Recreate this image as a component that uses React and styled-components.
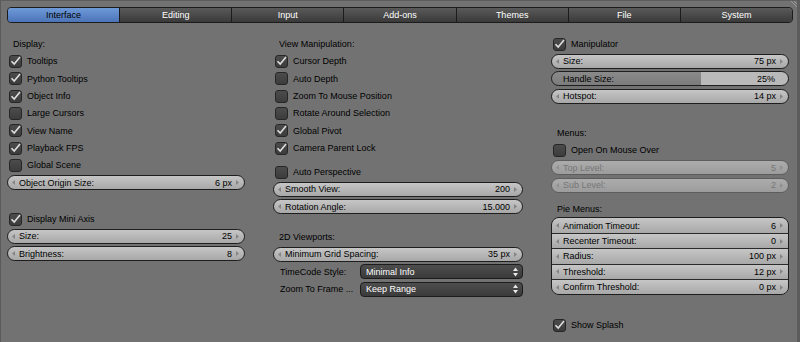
import React from "react";
import styled, { createGlobalStyle } from "styled-components";

const U = 17.33;

const GlobalStyle = createGlobalStyle`
  body {
    margin: 0;
    background: #727272;
    font-family: "Liberation Sans", Arial, sans-serif;
  }
`;

const Window = styled.div`
  position: relative;
  width: 800px;
  height: 342px;
  box-sizing: border-box;
  background: #727272;
  border-top: 1px solid #5e5e5e;
  border-left: 1px solid #5a5a5a;
  border-right: 3px solid #5c5c5c;
  overflow: hidden;
  font-size: 9px;
  color: #000;
`;

const Corner = styled.svg`
  position: absolute;
  top: 0;
  right: 0;
`;

const TabBar = styled.div`
  display: flex;
  height: 16px;
  margin: 6px 4px 0 6px;
  box-sizing: border-box;
  border: 1px solid #1c1c1c;
  border-radius: 4px;
  overflow: hidden;
`;

const Tab = styled.div`
  flex: 1;
  display: flex;
  align-items: center;
  justify-content: center;
  color: ${(p) => (p.active ? "#000" : "#fff")};
  background: ${(p) =>
    p.active
      ? "linear-gradient(#6e9ad8, #4c74b9)"
      : "linear-gradient(#5a5a5a, #3a3a3a)"};
  & + & {
    border-left: 1px solid #1c1c1c;
  }
`;

const Columns = styled.div`
  display: grid;
  grid-template-columns: 238px 250px 238px;
  column-gap: 28px;
  padding: 12.5px 0 0 6px;
`;

const Column = styled.div`
  display: flex;
  flex-direction: column;
`;

const SectionLabel = styled.div`
  height: ${U}px;
  display: flex;
  align-items: center;
  padding-left: 6px;
`;

const Row = styled.div`
  height: ${U}px;
  display: flex;
  align-items: center;
`;

const Spacer = styled.div`
  height: ${(p) => p.h}px;
  flex: none;
`;

const Box = styled.div`
  width: 13px;
  height: 13px;
  margin-left: 2px;
  box-sizing: border-box;
  border: 1px solid #262626;
  border-radius: 3px;
  background: linear-gradient(#4c4c4c, #3c3c3c);
  display: flex;
  align-items: center;
  justify-content: center;
  overflow: visible;
`;

const CheckLabel = styled.span`
  margin-left: 5px;
`;

const Field = styled.div`
  flex: 1;
  height: 15px;
  box-sizing: border-box;
  display: flex;
  align-items: center;
  padding: 0 5px 0 4px;
  border: 1px solid ${(p) => (p.disabled ? "#5d5d5d" : "#1e1e1e")};
  border-radius: 8px;
  color: ${(p) => (p.disabled ? "#767676" : "#000")};
  background: ${(p) =>
    p.disabled
      ? "linear-gradient(#acacac, #9c9c9c)"
      : "linear-gradient(#c6c6c6, #a8a8a8)"};
`;

const Slider = styled(Field)`
  padding: 0 9px 0 7px;
  background: linear-gradient(
      to right,
      transparent ${(p) => p.fill}%,
      #b9b9b9 ${(p) => p.fill}%
    ),
    linear-gradient(#8a8a8a, #7c7c7c);
`;

const FieldName = styled.span`
  flex: 1;
  margin-left: 4px;
  white-space: nowrap;
`;

const FieldValue = styled.span`
  margin-right: 4px;
  white-space: nowrap;
`;

const Group = styled.div`
  display: flex;
  flex-direction: column;
  border: 1px solid #1e1e1e;
  border-radius: 8px;
  overflow: hidden;
  margin-top: -0.7px;
`;

const GroupItem = styled.div`
  height: 14.4px;
  display: flex;
  align-items: center;
  padding: 0 5px 0 4px;
  background: linear-gradient(#c6c6c6, #a8a8a8);
  & + & {
    border-top: 1px solid #2a2a2a;
  }
`;

const MenuLabel = styled.span`
  width: 80px;
  padding-left: 7px;
  white-space: nowrap;
`;

const Dropdown = styled.div`
  width: 163px;
  height: 15px;
  box-sizing: border-box;
  display: flex;
  align-items: center;
  padding: 0 4px 0 5px;
  border: 1px solid #1c1c1c;
  border-radius: 4px;
  background: linear-gradient(#4e4e4e, #3a3a3a);
  color: #fff;
`;

const DropText = styled.span`
  flex: 1;
`;

const Arrow = ({ dir, disabled }) => (
  <svg width="3" height="5" viewBox="0 0 3 5">
    <path
      d={dir === "left" ? "M3 0 L0 2.5 L3 5 Z" : "M0 0 L3 2.5 L0 5 Z"}
      fill={disabled ? "#8f8f8f" : "#858585"}
    />
  </svg>
);

const UpDown = () => (
  <svg width="5" height="10" viewBox="0 0 5 10">
    <path d="M0 4 L2.5 0.5 L5 4 Z M0 6 L2.5 9.5 L5 6 Z" fill="#e8e8e8" />
  </svg>
);

const Check = ({ label, on }) => (
  <Row>
    <Box>
      {on && (
        <svg width="13" height="13" viewBox="0 0 13 13" style={{ flex: "none" }}>
          <path
            d="M2.5 6.2 L5.2 9 L11 2"
            fill="none"
            stroke="#dedede"
            strokeWidth="1.6"
          />
        </svg>
      )}
    </Box>
    <CheckLabel>{label}</CheckLabel>
  </Row>
);

const Num = ({ name, value, disabled }) => (
  <Row>
    <Field disabled={disabled}>
      <Arrow dir="left" disabled={disabled} />
      <FieldName>{name}</FieldName>
      <FieldValue>{value}</FieldValue>
      <Arrow dir="right" disabled={disabled} />
    </Field>
  </Row>
);

const Menu = ({ label, value }) => (
  <Row>
    <MenuLabel>{label}</MenuLabel>
    <Dropdown>
      <DropText>{value}</DropText>
      <UpDown />
    </Dropdown>
  </Row>
);

const tabs = ["Interface", "Editing", "Input", "Add-ons", "Themes", "File", "System"];

const pie = [
  ["Animation Timeout:", "6"],
  ["Recenter Timeout:", "0"],
  ["Radius:", "100 px"],
  ["Threshold:", "12 px"],
  ["Confirm Threshold:", "0 px"],
];

export default function App() {
  return (
    <>
      <GlobalStyle />
      <Window>
        <Corner width="10" height="10" viewBox="0 0 10 10">
          <path d="M4 0 L10 6 M7 0 L10 3" stroke="#9a9a9a" strokeWidth="1" />
        </Corner>
        <TabBar>
          {tabs.map((t, i) => (
            <Tab key={t} active={i === 0}>
              {t}
            </Tab>
          ))}
        </TabBar>
        <Columns>
          <Column>
            <SectionLabel>Display:</SectionLabel>
            <Check label="Tooltips" on />
            <Check label="Python Tooltips" on />
            <Check label="Object Info" on />
            <Check label="Large Cursors" />
            <Check label="View Name" on />
            <Check label="Playback FPS" on />
            <Check label="Global Scene" />
            <Num name="Object Origin Size:" value="6 px" />
            <Spacer h={19} />
            <Check label="Display Mini Axis" on />
            <Num name="Size:" value="25" />
            <Num name="Brightness:" value="8" />
          </Column>
          <Column>
            <SectionLabel>View Manipulation:</SectionLabel>
            <Check label="Cursor Depth" on />
            <Check label="Auto Depth" />
            <Check label="Zoom To Mouse Position" />
            <Check label="Rotate Around Selection" />
            <Check label="Global Pivot" on />
            <Check label="Camera Parent Lock" on />
            <Spacer h={6.67} />
            <Check label="Auto Perspective" />
            <Num name="Smooth View:" value="200" />
            <Num name="Rotation Angle:" value="15.000" />
            <Spacer h={13} />
            <SectionLabel>2D Viewports:</SectionLabel>
            <Num name="Minimum Grid Spacing:" value="35 px" />
            <Menu label="TimeCode Style:" value="Minimal Info" />
            <Menu label="Zoom To Frame ..." value="Keep Range" />
          </Column>
          <Column>
            <Check label="Manipulator" on />
            <Num name="Size:" value="75 px" />
            <Row>
              <Slider fill={63}>
                <FieldName>Handle Size:</FieldName>
                <FieldValue>25%</FieldValue>
              </Slider>
            </Row>
            <Num name="Hotspot:" value="14 px" />
            <Spacer h={19.67} />
            <SectionLabel>Menus:</SectionLabel>
            <Check label="Open On Mouse Over" />
            <Num name="Top Level:" value="5" disabled />
            <Num name="Sub Level:" value="2" disabled />
            <Spacer h={7} />
            <SectionLabel>Pie Menus:</SectionLabel>
            <Group>
              {pie.map(([n, v]) => (
                <GroupItem key={n}>
                  <Arrow dir="left" />
                  <FieldName>{n}</FieldName>
                  <FieldValue>{v}</FieldValue>
                  <Arrow dir="right" />
                </GroupItem>
              ))}
            </Group>
            <Spacer h={21.4} />
            <Check label="Show Splash" on />
          </Column>
        </Columns>
      </Window>
    </>
  );
}
